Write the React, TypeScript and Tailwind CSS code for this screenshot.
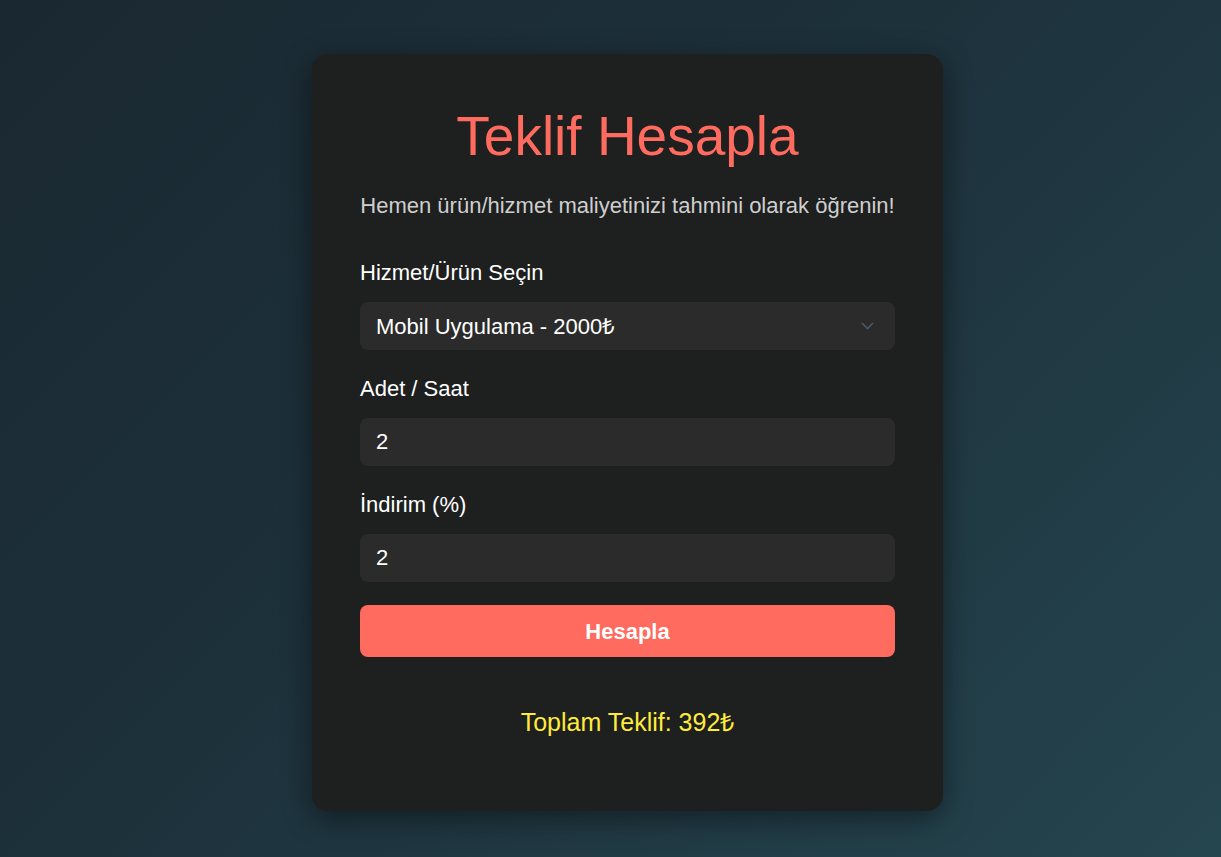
import { useState } from "react";

const prices: Record<string, number> = {
  web: 1500,
  mobil: 2000,
  seo: 500,
};

export default function App() {
  const [service, setService] = useState("mobil");
  const [qty, setQty] = useState("2");
  const [discount, setDiscount] = useState("2");
  const [total, setTotal] = useState<number | null>(392);

  const calculate = () => {
    const base = prices[service] * (Number(qty) || 0);
    setTotal(Math.round(base - (base * (Number(discount) || 0)) / 100));
  };

  return (
    <div
      className="min-h-[857px] w-full bg-[linear-gradient(135deg,#1a2831_0%,#1d313b_45%,#25454f_100%)] pt-[54px] pl-[34px] flex justify-center items-start"
      style={{ fontFamily: '"Liberation Sans", Arial, sans-serif' }}
    >
      <div className="w-[631px] h-[757px] bg-[#1e1f1f] rounded-[16px] shadow-[0_8px_30px_rgba(0,0,0,0.45)] px-12 pt-[50px] flex flex-col">
        <h1 className="text-center text-[55px] leading-[64px] text-[#ff6b5e] font-normal">
          Teklif Hesapla
        </h1>
        <p className="mt-[23px] text-center text-[22px] leading-[30px] text-[#cfcfcf]">
          Hemen ürün/hizmet maliyetinizi tahmini olarak öğrenin!
        </p>

        <label className="mt-[37px] text-[22px] leading-[30px] text-white">
          Hizmet/Ürün Seçin
        </label>
        <div className="relative mt-[14px]">
          <select
            value={service}
            onChange={(e) => setService(e.target.value)}
            className="w-full h-[48px] appearance-none rounded-[8px] bg-[#2b2b2b] pl-4 text-[22px] text-white outline-none"
          >
            <option value="web">Web Sitesi - 1500₺</option>
            <option value="mobil">Mobil Uygulama - 2000₺</option>
            <option value="seo">SEO Hizmeti - 500₺</option>
          </select>
          <svg
            className="pointer-events-none absolute right-[21px] top-[20px]"
            width="13"
            height="8"
            viewBox="0 0 13 8"
            fill="none"
          >
            <path d="M1 1l5.5 5.5L12 1" stroke="#4a5863" strokeWidth="1.6" />
          </svg>
        </div>

        <label className="mt-[24px] text-[22px] leading-[30px] text-white">
          Adet / Saat
        </label>
        <input
          type="number"
          value={qty}
          onChange={(e) => setQty(e.target.value)}
          className="mt-[14px] h-[48px] rounded-[8px] bg-[#2b2b2b] px-4 text-[22px] text-white outline-none"
        />

        <label className="mt-[24px] text-[22px] leading-[30px] text-white">
          İndirim (%)
        </label>
        <input
          type="number"
          value={discount}
          onChange={(e) => setDiscount(e.target.value)}
          className="mt-[14px] h-[48px] rounded-[8px] bg-[#2b2b2b] px-4 text-[22px] text-white outline-none"
        />

        <button
          onClick={calculate}
          className="mt-[23px] h-[52px] rounded-[8px] bg-[#ff6b5e] text-[22px] font-bold text-white"
        >
          Hesapla
        </button>

        {total !== null && (
          <div className="mt-[50px] text-center text-[25px] leading-[30px] text-[#ffeb3b]">
            Toplam Teklif: {total}₺
          </div>
        )}
      </div>
    </div>
  );
}
